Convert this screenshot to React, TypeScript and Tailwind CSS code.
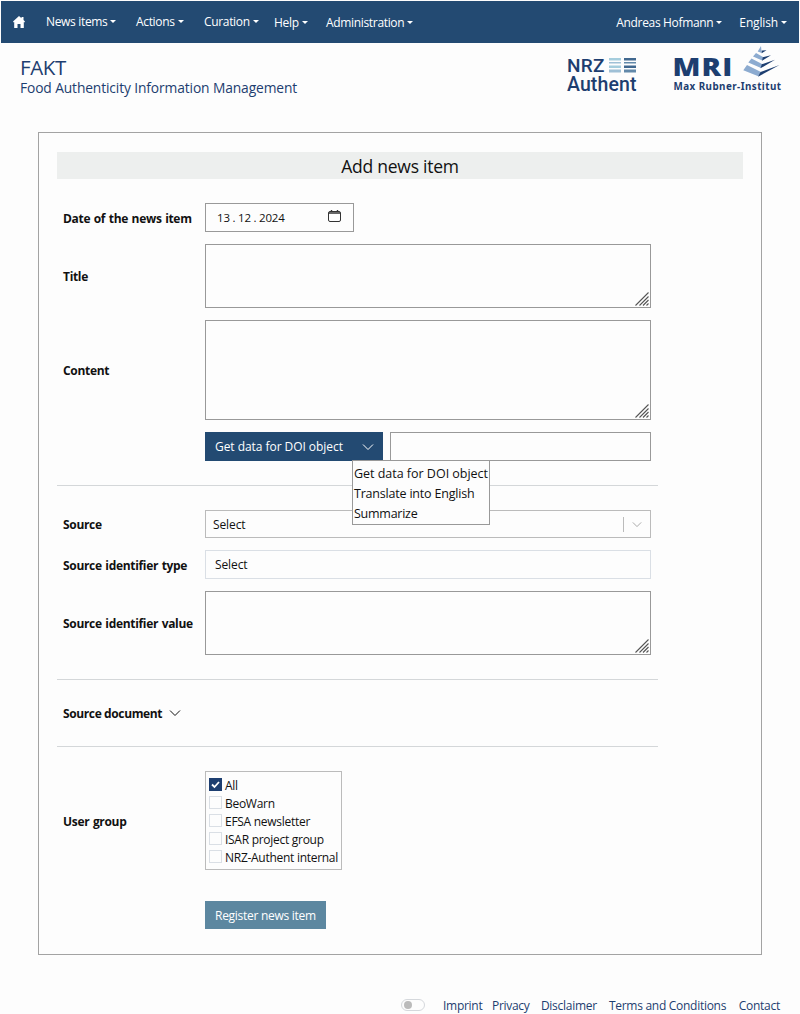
import type { ReactNode } from 'react'

interface MenuItem {
  label: string
  cls:   string
}

const MENU: MenuItem[] = [
  { label: 'News items',     cls: 'w-[90px]' },
  { label: 'Actions',        cls: 'w-[68px]' },
  { label: 'Curation',       cls: 'w-[70px]' },
  { label: 'Help',           cls: 'w-[52px] pt-px' },
  { label: 'Administration', cls: 'pt-px' },
]

const GROUPS = [
  { label: 'All',                  checked: true  },
  { label: 'BeoWarn',              checked: false },
  { label: 'EFSA newsletter',      checked: false },
  { label: 'ISAR project group',   checked: false },
  { label: 'NRZ-Authent internal', checked: false },
]

function Caret() {
  return <span className="ml-[3px] inline-block border-x-[3px] border-t-[3px] border-x-transparent border-t-current align-[3px]" />
}

function Chevron({ className }: { className: string }) {
  return (
    <svg className={className} viewBox="0 0 12 8" fill="none" stroke="currentColor">
      <path d="M1 1.5 6 6.5 11 1.5" />
    </svg>
  )
}

function TextBox({ className }: { className: string }) {
  return (
    <div className={`flex w-[446px] items-end justify-end border border-[#999] ${className}`}>
      <svg className="mr-px mb-px h-3.5 w-3.5" viewBox="0 0 14 14" stroke="#555" strokeWidth="1.1">
        <path d="M.5 13.5 13.500 .5M4.500 13.500 13.500 4.500M8 13.500 13.500 8M11.500 13.500 13.500 11.500" />
      </svg>
    </div>
  )
}

function Row({ label, className, children }: { label: string; className: string; children: ReactNode }) {
  return (
    <div className={`flex items-center ${className}`}>
      <div className="w-[148px] shrink-0 pt-0.5 pl-1.5 font-bold tracking-[-0.32px] whitespace-nowrap [word-spacing:0.8px]">{label}</div>
      {children}
    </div>
  )
}

function Divider({ className }: { className?: string }) {
  return <div className={`h-px w-[601px] bg-[#d4d7d9] ${className ?? ''}`} />
}

function NrzLogo() {
  return (
    <div className="mt-[13px] w-[70px] font-['Roboto',sans-serif] font-medium">
      <div className="flex h-[18px] items-start justify-between">
        <span className="text-[19px] leading-[19px] tracking-[0.3px]">NRZ</span>
        <svg className="mt-0.5 mr-px h-[15px] w-[27px]" viewBox="0 0 27 15">
          <path fill="#a5cddd" d="M0 0h12v2.500H0zM0 7.500h12V10H0z" />
          <path fill="#9fc0d6" d="M0 4h12v1.500H0zM0 11.500h12v3H0z" />
          <path fill="#41688f" d="M15 0h12v2.500H15zM15 7.500h12V10H15z" />
          <path fill="#6289aa" d="M15 4h12v1.500H15zM15 11.500h12v3H15z" />
        </svg>
      </div>
      <div className="text-[19.5px] leading-[21px] tracking-[0.1px]">Authent</div>
    </div>
  )
}

function MriLogo() {
  return (
    <svg className="mt-0.5 ml-[32px] h-[50px] w-[114px] overflow-visible" viewBox="0 0 114 50" fill="#1d3e70">
      <text x="3.500" y="31" fontSize="25.500" fontWeight="800" textLength="61" className="font-['Open_Sans',sans-serif]" lengthAdjust="spacingAndGlyphs" letterSpacing="1">MRI</text>
      <text x="4.500" y="45" fontSize="11" fontWeight="700" textLength="108" letterSpacing="0.500" lengthAdjust="spacingAndGlyphs" className="font-['Noto_Sans',sans-serif]">
        Max Rubner-Institut
      </text>
      {/* stacked leaves beside the letters */}
      <path fill="#8cabd0" d="M92 1 88.700 6.500 92.700 8zM87 8 84 11.500 93.300 15.500 94 12zM82.500 13.500 79.300 17.500 92 23 93 19zM78 20 74.300 25.300 89.300 31.300 92 27z" />
      <path d="M92.700 8.300 97.500 5.300 92.700 5.500zM93 15.700 102 10.300 93.700 12.300zM91.500 23.300 106 14.800 92.700 19.300zM89 31.800 110.500 20 91.500 27z" />
    </svg>
  )
}

function Navbar() {
  return (
    <nav className="mx-px mt-px flex h-[42px] items-start bg-[#234a72] leading-[42px] tracking-[-0.33px] whitespace-nowrap text-white">
      <svg className="mt-[15px] ml-3 h-[12px] w-[12px]" viewBox="0 0 12 12" fill="currentColor">
        <path d="M6 0 8.500 2.300V1H10.500V4.100L12 5.600 11.300 6.400 10.800 6V12H7.500V8H4.500V12H1.200V6L.7 6.400 0 5.600z" />
      </svg>
      <div className="flex pl-[21px]">
        {MENU.map(m => (
          <div key={m.label} className={m.cls}>{m.label}<Caret /></div>
        ))}
      </div>
      <div className="mr-3 ml-auto flex gap-[17px] pt-px">
        <div>Andreas Hofmann<Caret /></div>
        <div className="tracking-[-0.15px]">English<Caret /></div>
      </div>
    </nav>
  )
}

export default function App() {
  return (
    <div className="h-[1014px] w-[800px] overflow-hidden bg-[#fdfdfd] font-['Open_Sans',sans-serif] text-[12px] tracking-[-0.28px] text-[#111]">
      <Navbar />

      {/* Brand header */}
      <header className="flex h-[89px] items-start pr-[17px] pl-5 text-[#1d3e70]">
        <div className="pt-3">
          <h1 className="text-[20.5px] leading-6 tracking-[-0.4px]">FAKT</h1>
          <p className="text-[13.8px] leading-[17px] tracking-[-0.12px]">Food Authenticity Information Management</p>
        </div>
        <div className="ml-auto flex">
          <NrzLogo />
          <MriLogo />
        </div>
      </header>

      <main className="mx-[38px] h-[823px] border border-[#a3a3a3] px-[18px]">
        <h2 className="mt-[19px] h-[27px] bg-[#edefee] text-center text-[17.5px] leading-[28px] tracking-[-0.25px]">Add news item</h2>

        <Row label="Date of the news item" className="mt-6">
          <div className="flex h-[29px] w-[149px] items-center justify-between border border-[#999] pr-3 pl-[11px] text-[11.5px] tracking-[-0.1px]">
            <span className="flex pt-px">
              <span>13</span>
              <span className="w-2 text-center">.</span>
              <span>12</span>
              <span className="w-2 text-center">.</span>
              <span>2024</span>
            </span>
            <svg className="mb-1 h-3 w-[13px]" viewBox="0 0 13 12" fill="none" stroke="#333">
              <rect x=".5" y="1.500" width="12" height="10" rx="1.500" />
              <path d="M1 3H12M3.500 0V2M9.500 0V2" strokeWidth="1.400" />
            </svg>
          </div>
        </Row>
        <Row label="Title" className="mt-3"><TextBox className="h-[64px]" /></Row>
        <Row label="Content" className="mt-3"><TextBox className="h-[100px]" /></Row>

        {/* Action picker with its open menu */}
        <div className="mt-3 flex h-[29px] pl-[148px]">
          <div className="relative flex w-[178px] items-center justify-between bg-[#234a72] pr-[9px] pl-[10px] text-white">
            <span className="pt-px tracking-[-0.05px]">Get data for DOI object</span>
            <Chevron className="h-2 w-3" />
            <div className="absolute top-[28px] left-[147px] z-10 h-[65px] w-[138px] border border-[#999] bg-[#fdfdfd] pt-[3px] pl-px text-[12.5px] leading-5 whitespace-nowrap text-[#111]">
              <div className="tracking-[-0.02px]">Get data for DOI object</div>
              <div className="tracking-[-0.2px]">Translate into English</div>
              <div className="tracking-[-0.25px]">Summarize</div>
            </div>
          </div>
          <div className="ml-[7px] w-[261px] border border-[#999]" />
        </div>

        <Divider className="mt-6" />
        <Row label="Source" className="mt-6">
          <div className="flex h-7 w-[446px] items-center border border-[#bbb] pl-[7px]">
            <span className="pt-px tracking-[-0.1px]">Select</span>
            <span className="ml-auto h-[15px] w-px bg-[#bbb]" />
            <Chevron className="mr-2 ml-2 h-[7px] w-[10px] text-[#999]" />
          </div>
        </Row>
        <Row label="Source identifier type" className="mt-3">
          <div className="flex h-[29px] w-[446px] items-center border border-[#dadfe5] pt-px pl-[9px] tracking-[-0.1px]">Select</div>
        </Row>
        <Row label="Source identifier value" className="mt-3"><TextBox className="h-[64px]" /></Row>

        <Divider className="mt-6" />
        <div className="flex h-[66px] items-center pt-0.5 pl-1.5 font-bold tracking-[-0.38px]">
          Source document
          <Chevron className="mb-0.5 ml-[7px] h-2 w-3" />
        </div>
        <Divider />

        <Row label="User group" className="mt-6">
          <div className="h-[99px] w-[137px] border border-[#bbb] pt-[5px] pl-[3px]">
            {GROUPS.map(g => (
              <div key={g.label} className="flex h-[18px] items-center gap-[3px] whitespace-nowrap">
                <span className={`mb-[3px] h-[13px] w-[13px] shrink-0 border ${g.checked ? 'border-[#1d3e70] bg-[#1d3e70]' : 'border-[#dadfe5]'}`}>
                  {g.checked && (
                    <svg viewBox="0 0 11 11" fill="none" stroke="white" strokeWidth="1.800">
                      <path d="M2 5.500 4.500 8 9 3" />
                    </svg>
                  )}
                </span>
                <span>{g.label}</span>
              </div>
            ))}
          </div>
        </Row>

        <div className="mt-[31px] ml-[148px] flex h-7 w-[121px] items-center bg-[#5c87a0] pt-px pl-[10px] whitespace-nowrap text-white">
          Register news item
        </div>
      </main>

      <footer className="mt-[40px] flex h-5 items-center pr-5 whitespace-nowrap text-[#1d3e70]">
        <span className="mb-px ml-[401px] flex h-3 w-6 items-center rounded-full border border-[#d5d8dc] pl-0.5">
          <span className="h-2 w-2 rounded-full bg-[#bbb]" />
        </span>
        <span className="ml-[18px] w-[49px] pt-0.5">Imprint</span>
        <span className="w-[49px] pt-0.5">Privacy</span>
        <span className="w-[68px] pt-0.5">Disclaimer</span>
        <span className="w-[130px] pt-0.5">Terms and Conditions</span>
        <span className="pt-0.5">Contact</span>
      </footer>
    </div>
  )
}
